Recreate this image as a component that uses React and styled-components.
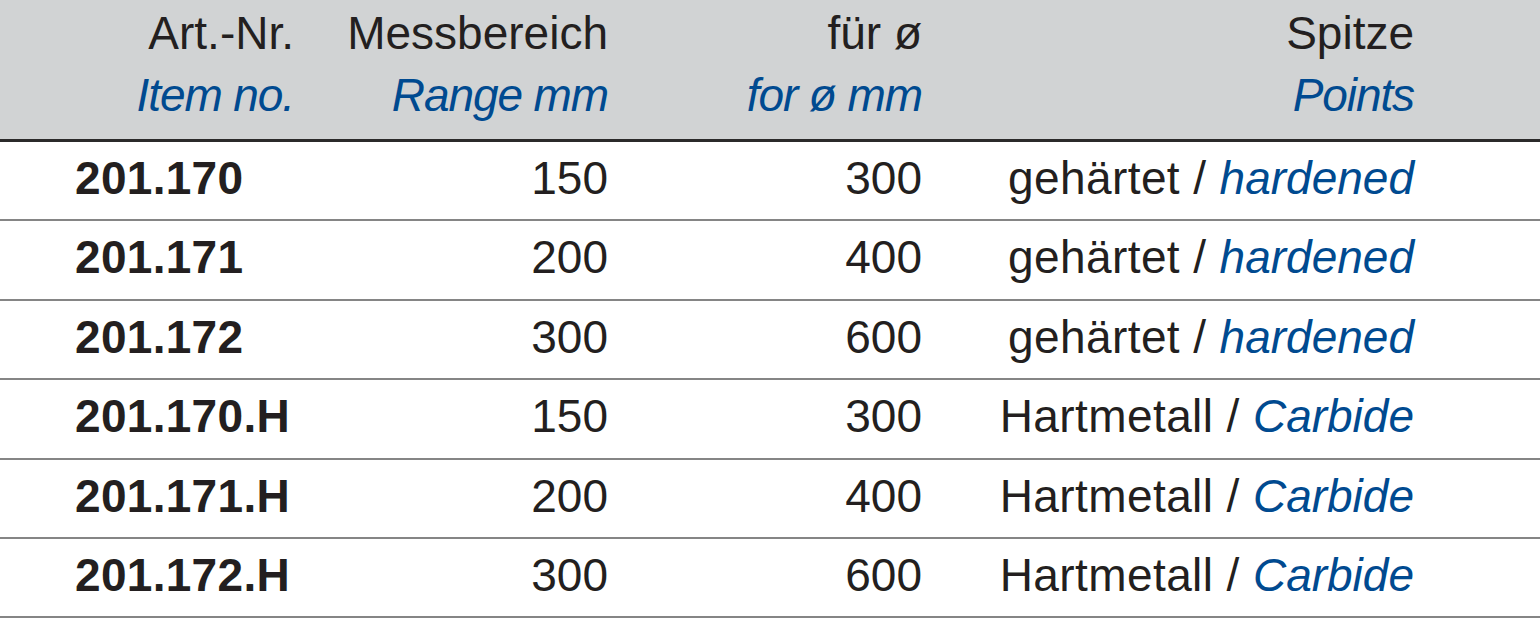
import React from 'react';
import styled, { createGlobalStyle } from 'styled-components';

const GlobalStyle = createGlobalStyle`
  html, body {
    margin: 0;
    padding: 0;
    background: #ffffff;
  }
  body {
    font-family: "Liberation Sans", Arial, sans-serif;
    color: #231f20;
  }
`;

const rows = [
  { no: '201.170', range: '150', dia: '300', de: 'gehärtet', en: 'hardened' },
  { no: '201.171', range: '200', dia: '400', de: 'gehärtet', en: 'hardened' },
  { no: '201.172', range: '300', dia: '600', de: 'gehärtet', en: 'hardened' },
  { no: '201.170.H', range: '150', dia: '300', de: 'Hartmetall', en: 'Carbide' },
  { no: '201.171.H', range: '200', dia: '400', de: 'Hartmetall', en: 'Carbide' },
  { no: '201.172.H', range: '300', dia: '600', de: 'Hartmetall', en: 'Carbide' },
];

const App = () => {
  return (
    <>
      <GlobalStyle />
      <Table>
        <HeaderRow>
          <HeadCell>
            <span>Art.-Nr.</span>
            <En $tight>Item no.</En>
          </HeadCell>
          <HeadCell>
            <span>Messbereich</span>
            <En $tight>Range mm</En>
          </HeadCell>
          <HeadCell>
            <span>für ø</span>
            <En $tight>for ø mm</En>
          </HeadCell>
          <HeadCell>
            <span>Spitze</span>
            <En $tight>Points</En>
          </HeadCell>
          <div />
        </HeaderRow>
        {rows.map((r) => (
          <Row key={r.no}>
            <ItemNo>{r.no}</ItemNo>
            <Cell>{r.range}</Cell>
            <Cell>{r.dia}</Cell>
            <Cell>
              <De>{r.de} / </De>
              <En>{r.en}</En>
            </Cell>
            <div />
          </Row>
        ))}
      </Table>
    </>
  );
};

// Spaltenbreiten: rechte Kanten bei 294 / 608 / 922 / 1414
const columns = '294px 314px 314px 492px 1fr';

const Table = styled.div`
  width: 1540px;
  display: flex;
  flex-direction: column;
`;

const HeaderRow = styled.div`
  display: grid;
  grid-template-columns: ${columns};
  background: #d1d3d4;
  padding: 2px 0 13px;
  border-bottom: 3px solid #2b2a2a;
`;

const HeadCell = styled.div`
  display: flex;
  flex-direction: column;
  align-items: flex-end;
  font-size: 46px;
  line-height: 62px;
  white-space: nowrap;
`;

const En = styled.span`
  color: #004a90;
  font-style: italic;
  letter-spacing: ${(p) => (p.$tight ? '-1.1px' : '0')};
`;

const De = styled.span`
  letter-spacing: 0.4px;
`;

const Row = styled.div`
  display: grid;
  grid-template-columns: ${columns};
  box-sizing: border-box;
  height: 79.4px;
  padding-bottom: 5.4px;
  border-bottom: 2px solid #858585;
  font-size: 46px;
  line-height: 72px;
  white-space: nowrap;
`;

const Cell = styled.div`
  text-align: right;
`;

const ItemNo = styled.div`
  font-weight: 700;
  padding-left: 75px;
  letter-spacing: 0.3px;
`;

export default App;
